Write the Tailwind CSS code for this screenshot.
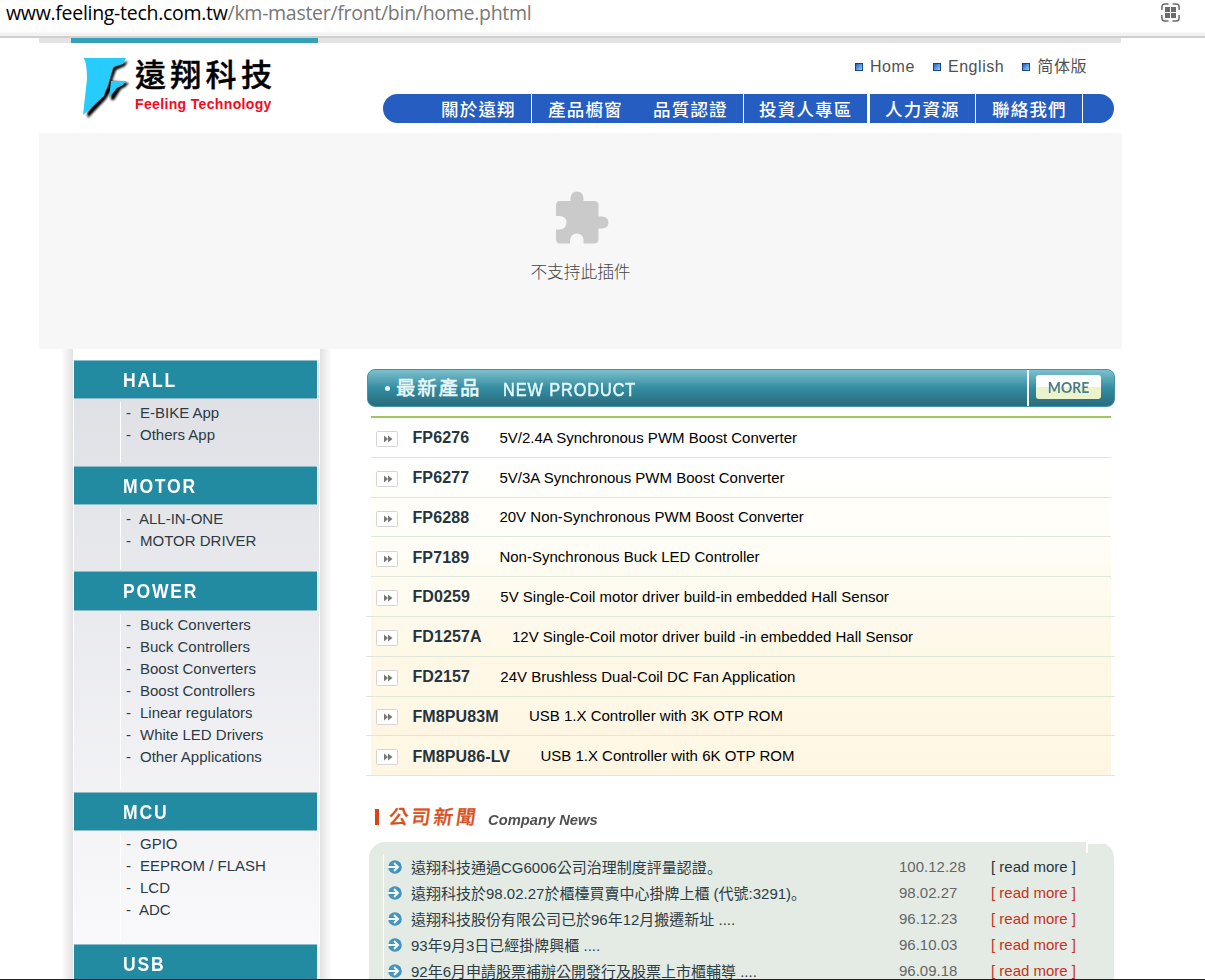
<!DOCTYPE html>
<html lang="zh-Hant">
<head>
<meta charset="utf-8">
<title>遠翔科技</title>
<script src="https://cdn.jsdelivr.net/npm/@tailwindcss/browser@4"></script>
</head>
<body class="relative h-[980px] w-[1205px] overflow-hidden bg-white font-['Liberation_Sans','Noto_Sans_CJK_TC',sans-serif] whitespace-nowrap">

<!-- address bar -->
<header class="flex h-[38px] justify-between border-b-2 border-[#cfcfcf] bg-linear-to-b from-white from-[32px] to-[#f2f2f2] to-[33px] pl-[6px] pr-[25px]">
  <div class="h-7 font-['Open_Sans',sans-serif] text-[19.5px] leading-[26px] tracking-[-.29px] text-[#777]"><span class="text-black">www.feeling-tech.com.tw</span>/km-master/front/bin/home.phtml</div>
  <svg class="mt-[3px] h-[19px] w-[19px]" viewBox="0 0 19 19" fill="none" stroke="#6b6b6b" stroke-width="1.5"><path d="M.9 7V4Q.9.9 4 .9H7.500M11.500.9H15Q18.100.9 18.100 4V7M18.100 12V15Q18.100 18.100 15 18.100H11.500M7.500 18.100H4Q.9 18.100.9 15V12"/><path fill="#6b6b6b" stroke="none" d="M4 4h5v5H4zM10 4h5v5h-5zM4 10h5v5H4zM10 10h5v5h-5z"/></svg>
</header>

<div class="ml-[39px] w-[1083px]">
  <div class="h-[5px] w-[1082px] bg-[#e3e3e3] pl-8"><div class="h-[5px] w-[247px] bg-[#33a2b9]"></div></div>

  <!-- masthead -->
  <div class="flex h-[90px]">
    <div class="flex w-[344px] pl-[43px] pt-[14px]">
      <svg class="h-[64px] w-[49px] shrink-0" viewBox="0 0 49 64"><defs><filter id="soft" x="-20%" y="-20%" width="140%" height="140%"><feGaussianBlur stdDeviation=".9"/></filter></defs><path filter="url(#soft)" d="M46 4L43 9 34 13 30 24 47 26 43 30 39 32 32 43 29 43 29 34 24 42 6 61 5 56 25 31 31 10z" fill="#000"/><path d="M1.500 1H44L41 7 31 9.500 22 39 1 58 5 22Q5 5 1.500 1z" fill="#25ccfc"/><path d="M29 24H44L41 28 35 31 27 41z" fill="#25ccfc"/></svg>
      <div class="pl-[4px]">
        <div class="-mt-[3px] h-[40px] font-['Noto_Sans_CJK_TC',sans-serif] text-[31px] leading-[37px] font-medium tracking-[4.3px] text-black [-webkit-text-stroke:.4px_black]">遠翔科技</div>
        <div class="text-[14px] leading-[20px] font-bold tracking-[.35px] text-[#f8071c]">Feeling Technology</div>
      </div>
    </div>
    <div class="w-[731px]">
      <div class="flex h-[51px] items-start gap-[18px] pl-[472px] pt-[12px] font-['Liberation_Sans','Noto_Sans_CJK_SC',sans-serif] text-[16px] leading-[24px] tracking-[.56px] text-[#505050]">
        <div class="flex items-center gap-[7px]"><i class="h-2 w-2 border border-[#16458b] bg-linear-to-br from-[#2163bb] to-[#9cd0fa]"></i>Home</div>
        <div class="flex items-center gap-[7px]"><i class="h-2 w-2 border border-[#16458b] bg-linear-to-br from-[#2163bb] to-[#9cd0fa]"></i>English</div>
        <div class="flex items-center gap-[7px]"><i class="h-2 w-2 border border-[#16458b] bg-linear-to-br from-[#2163bb] to-[#9cd0fa]"></i>简体版</div>
      </div>
      <nav class="flex h-[29px] overflow-hidden rounded-full bg-[#255dc1] text-[17.500px] leading-[32px] font-medium tracking-[1.2px] text-white">
        <div class="w-[149px] border-r border-white pl-[58px]">關於遠翔</div>
        <div class="w-[106px] pl-[16px]">產品櫥窗</div>
        <div class="w-[106px] border-r border-white pl-[15px]">品質認證</div>
        <div class="w-[126px] border-r-3 border-white pl-[15px]">投資人專區</div>
        <div class="w-[106px] border-r border-white pl-[15px]">人力資源</div>
        <div class="w-[107px] border-r border-white pl-[16px]">聯絡我們</div>
      </nav>
    </div>
  </div>

  <!-- blocked plug-in -->
  <div class="flex h-[216px] flex-col items-center bg-[#f7f7f7] pt-[58px]">
    <svg class="ml-[2px] h-[54px] w-[54px]" viewBox="0 0 54 54"><path fill="#cacaca" d="M5 10H15.500V7Q16 .5 22 .5T28.500 7V10H39Q43.500 10 43.500 14.500V25.500H47Q53.500 26 53.500 31.500T47 37.500H43.500V48Q43.500 52.500 39 52.500H28.500V49Q28 42.500 22 42.500T15 49V52.500H5Q1 52.500 1 48V38.500H4Q11.500 38 11.500 31.500T4 25H1V14.500Q1 10 5 10z"/></svg>
    <div class="mt-[13px] font-['Noto_Sans_CJK_SC',sans-serif] text-[16.700px] leading-[26px] font-light text-[#444]">不支持此插件</div>
  </div>

  <div class="flex h-[631px]">
    <!-- product categories -->
    <aside class="flex w-[293px] pl-[22px]">
      <div class="w-3 bg-linear-to-r from-white to-[#e2e2e2]"></div>
      <div class="w-[247px] bg-white pl-px pr-px pt-[11px]">
        <div class="h-[621px] bg-linear-to-b from-[#dedfe4] to-[#fbfbfd]">
          <div class="w-[244px] border-r border-white"><div class="h-[39px] border-y border-[#8ebdca] bg-[#228aa1] pl-[48.500px] text-[19.500px] leading-[38px] font-bold tracking-[2px] text-white"><span class="inline-block origin-left scale-x-[.9]">HALL</span></div></div>
          <div class="h-[67px] pt-[3px] pl-[46px]"><ul class="h-[61px] border-l border-white pl-[5px] text-[15px] leading-[22px] text-[#2c3a44]"><li><span class="inline-block w-[14px]">-</span>E-BIKE App</li><li><span class="inline-block w-[14px]">-</span>Others App</li></ul></div>
          <div class="w-[244px] border-r border-white"><div class="h-[39px] border-y border-[#8ebdca] bg-[#228aa1] pl-[48.500px] text-[19.500px] leading-[38px] font-bold tracking-[2px] text-white"><span class="inline-block origin-left scale-x-[.9]">MOTOR</span></div></div>
          <div class="h-[66px] pt-[3px] pl-[46px]"><ul class="h-[61px] border-l border-white pl-[5px] text-[15px] leading-[22px] text-[#2c3a44]"><li><span class="inline-block w-[13px]">-</span>ALL-IN-ONE</li><li><span class="inline-block w-[14px]">-</span>MOTOR DRIVER</li></ul></div>
          <div class="w-[244px] border-r border-white"><div class="h-[40px] border-y border-[#8ebdca] bg-[#228aa1] pl-[48.500px] text-[19.500px] leading-[38px] font-bold tracking-[2px] text-white"><span class="inline-block origin-left scale-x-[.9]">POWER</span></div></div>
          <div class="h-[181px] pt-[3px] pl-[46px]"><ul class="h-[175px] border-l border-white pl-[5px] text-[15px] leading-[22px] text-[#2c3a44]"><li><span class="inline-block w-[14px]">-</span>Buck Converters</li><li><span class="inline-block w-[14px]">-</span>Buck Controllers</li><li><span class="inline-block w-[14px]">-</span>Boost Converters</li><li><span class="inline-block w-[14px]">-</span>Boost Controllers</li><li><span class="inline-block w-[14px]">-</span>Linear regulators</li><li><span class="inline-block w-[14px]">-</span>White LED Drivers</li><li><span class="inline-block w-[14px]">-</span>Other Applications</li></ul></div>
          <div class="w-[244px] border-r border-white"><div class="h-[39px] border-y border-[#8ebdca] bg-[#228aa1] pl-[48.500px] text-[19.500px] leading-[38px] font-bold tracking-[2px] text-white"><span class="inline-block origin-left scale-x-[.9]">MCU</span></div></div>
          <div class="h-[113px] pt-[2px] pl-[46px]"><ul class="h-[109px] border-l border-white pl-[5px] text-[15px] leading-[22px] text-[#2c3a44]"><li><span class="inline-block w-[14px]">-</span>GPIO</li><li><span class="inline-block w-[14px]">-</span>EEPROM / FLASH</li><li><span class="inline-block w-[14px]">-</span>LCD</li><li><span class="inline-block w-[13px]">-</span>ADC</li></ul></div>
          <div class="w-[244px] border-r border-white"><div class="h-[39px] border-y border-[#8ebdca] bg-[#228aa1] pl-[48.500px] text-[19.500px] leading-[38px] font-bold tracking-[2px] text-white"><span class="inline-block origin-left scale-x-[.9]">USB</span></div></div>
        </div>
      </div>
      <div class="w-3 bg-linear-to-r from-[#e2e2e2] to-white"></div>
    </aside>

    <main class="ml-[34px] w-[750px] pt-[20px]">
      <!-- new products -->
      <div class="ml-px flex h-[38px] w-[748px] overflow-hidden rounded-lg border border-[#3c95a8] bg-linear-to-b from-[#7cc0cd] via-[#338da1] via-50% to-[#2b6a7e] text-[#e6f8f9]">
        <div class="flex w-[661px] items-center border-r-2 border-white pl-[17px]"><i class="h-[5px] w-[5px] rounded-full bg-[#e6f8f9]"></i><span class="ml-[6px] pt-px text-[19.500px] font-medium tracking-[1.800px] [-webkit-text-stroke:.3px_#e6f8f9]">最新產品</span><span class="ml-[21.500px] inline-block origin-left scale-x-[.93] pt-[4px] text-[17.500px] tracking-[1px] [-webkit-text-stroke:.5px_#e6f8f9]">NEW PRODUCT</span></div>
        <div class="ml-[7px] mt-[5px] h-[24px] w-[65px] rounded-[3px] bg-linear-to-b from-white from-50% to-[#eaf3cb] to-50% text-center font-['Lato',sans-serif] text-[14.500px] leading-[25px] font-bold text-[#4b7c8a]"><span class="inline-block scale-x-[.96]">MORE</span></div>
      </div>
      <div class="ml-[5px] mt-[9px] h-[2px] w-[740px] bg-[#a0c75c]"></div>
      <div id="products" class="ml-[5px] h-[358px] w-[742px]"></div>

      <!-- company news -->
      <div class="flex h-[66px] items-center pl-[9px] pt-[16px]"><i class="h-[16px] w-[4px] bg-[#dc4317]"></i><span class="ml-[10px] pt-[2px] -skew-x-8 text-[19.500px] font-medium tracking-[2.900px] text-[#d95021] [-webkit-text-stroke:.3px_#d95021]">公司新聞</span><span class="ml-[9px] inline-block origin-left scale-x-[.95] pt-[6px] text-[15.500px] font-bold text-[#505050] italic">Company News</span></div>
      <div class="ml-[3px] flex h-[138px] w-[745px] overflow-hidden rounded-t-2xl bg-[#e3ebe4]">
        <div id="news" class="mt-[12px] ml-[14px] h-[126px] w-[703px] border-l border-white pl-[4px] text-[15px] leading-[26px]"></div>
        <div class="h-[11px] w-[2px] bg-white"></div>
        <div class="h-[2px] flex-1 bg-white"></div>
      </div>
    </main>
  </div>
</div>
<div class="absolute bottom-0 left-0 h-px w-full bg-[#202020]"></div>

<script>
const products = [
  ['FP6276','5V/2.4A Synchronous PWM Boost Converter','from-white to-white'],
  ['FP6277','5V/3A Synchronous PWM Boost Converter','from-white to-[#fefefa]'],
  ['FP6288','20V Non-Synchronous PWM Boost Converter','from-[#fffef9] to-[#fefdf7]'],
  ['FP7189','Non-Synchronous Buck LED Controller','from-[#fffdf6] to-[#fefcf1]'],
  ['FD0259','5V Single-Coil motor driver build-in embedded Hall Sensor','from-[#fefbf1] to-[#fefaec]'],
  ['FD1257A','12V Single-Coil motor driver build -in embedded Hall Sensor','from-[#fef8ec] to-[#fef9e6]'],
  ['FD2157','24V Brushless Dual-Coil DC Fan Application','from-[#fef7e6] to-[#fef8e5]'],
  ['FM8PU83M','USB 1.X Controller with 3K OTP ROM','from-[#fef8e6] to-[#fef6e3]'],
  ['FM8PU86-LV','USB 1.X Controller with 6K OTP ROM','from-[#fef8e4] to-[#fef6e3]']
];
document.getElementById('products').innerHTML = products.map(([n, d, bg], i) => `
  <div class="h-[39.8px] border-b border-[#dfe6da] ${i > 3 ? '-ml-[5px] w-[749px] pl-[5px]' : 'w-[740px]'}"><div class="flex h-full w-[740px] items-center bg-linear-to-b pl-[5px] ${bg}">
    <svg class="${i > 3 ? 'mt-[3px]' : 'mt-[4px]'} h-[16px] w-[22px] shrink-0" viewBox="0 0 22 16"><rect x=".5" y=".5" width="21" height="15" rx="1" fill="#fff" stroke="#d5d5d5"/><path d="M8 4.500l4 3.500-4 3.500zM12 4.500l4.500 3.500-4.500 3.500z" fill="#777"/></svg>
    <b class="ml-[14.500px] pt-[1.500px] text-[16px] tracking-[.1px] text-[#243440]">${n}</b><span class="ml-[30.3px] pt-[1.500px] text-[15px] text-black">${d}</span>
  </div></div>`).join('');
const news = [
  ['遠翔科技通過CG6006公司治理制度評量認證。','100.12.28'],
  ['遠翔科技於98.02.27於櫃檯買賣中心掛牌上櫃 (代號:3291)。','98.02.27'],
  ['遠翔科技股份有限公司已於96年12月搬遷新址 ....','96.12.23'],
  ['93年9月3日已經掛牌興櫃 ....','96.10.03'],
  ['92年6月申請股票補辦公開發行及股票上市櫃輔導 ....','96.09.18']
];
document.getElementById('news').innerHTML = news.map(([t, d], i) => `
  <div class="flex h-[26px] items-center">
    <svg class="h-[14px] w-[14px]" viewBox="0 0 14 14"><circle cx="7" cy="7" r="6.800" fill="#4594bf"/><path d="M0 7H9M6 3l4 4-4 4" fill="none" stroke="#f1f7f4" stroke-width="2"/></svg>
    <span class="ml-[9px] w-[488px] pt-px text-[#2d3c45]">${t.replace('。', '<span lang="zh-Hans" class="font-[\'Noto_Sans_CJK_SC\']">。</span>')}</span><span class="w-[92px] text-[#666]">${d}</span><span class="${i ? 'text-[#c9301c]' : 'text-[#263640]'}">[ read more ]</span>
  </div>`).join('');
</script>
</body>
</html>
